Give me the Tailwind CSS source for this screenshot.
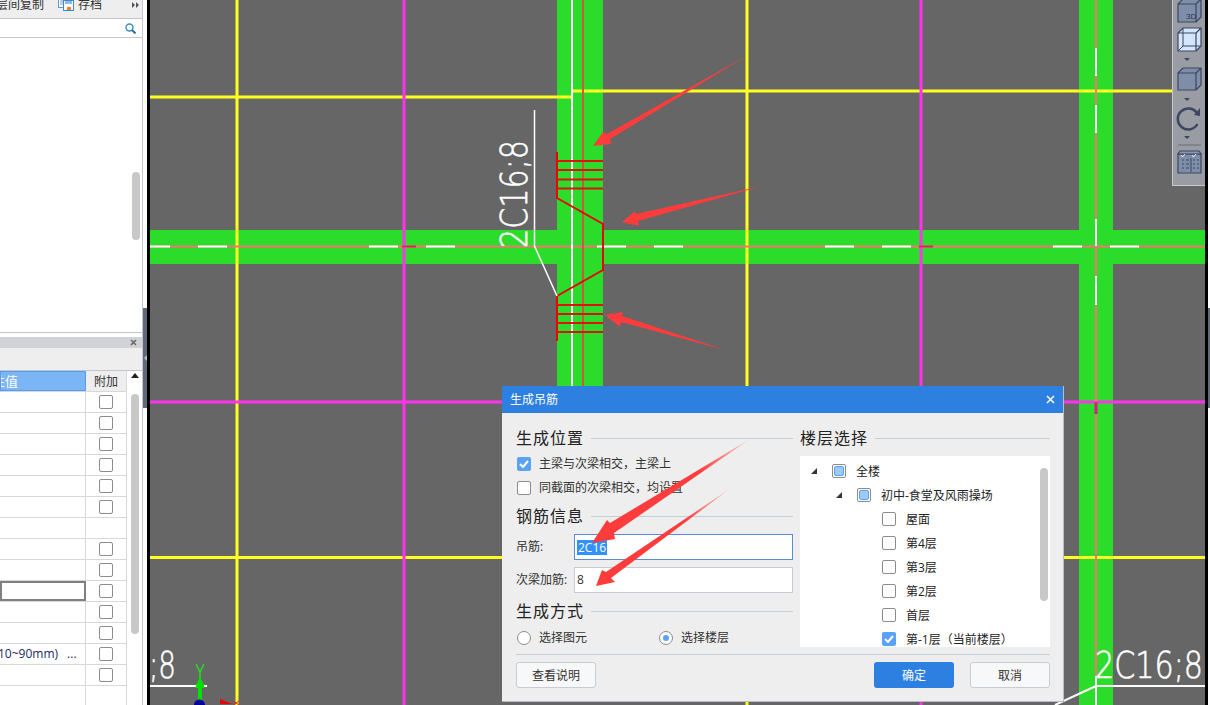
<!DOCTYPE html>
<html lang="zh-CN">
<head>
    <meta charset="UTF-8">
    <title>生成吊筋</title>
    <script src="https://cdn.jsdelivr.net/npm/@tailwindcss/browser@4"></script>
</head>
<body class="w-[1210px] h-[705px] overflow-hidden bg-white flex font-['Open_Sans','Noto_Sans_CJK_SC',sans-serif] text-[12px] text-[#333]">

    <!-- Left side panels -->
    <aside class="w-[143px] h-full flex flex-col border-r border-[#c4c4cc] overflow-hidden shrink-0">
        <div class="h-[19px] shrink-0 bg-[#eeeeee] border-b border-[#c4c4cc] flex items-center whitespace-nowrap relative overflow-hidden pb-[8px]">
            <span class="ml-[-4px] w-[62px]">层间复制</span>
            <svg class="w-[16px] h-[14px] -translate-y-px" viewBox="0 0 16 14"><rect x="0.5" y="0.5" width="9" height="10" fill="#fff" stroke="#5a9be0"/><path d="M2 3h6M2 5h6M2 7h3" stroke="#999"/><rect x="5.5" y="3.5" width="10" height="10" fill="#fff" stroke="#3b86d8"/><rect x="9" y="10" width="4" height="3" fill="#e8822e"/><rect x="7" y="4" width="7" height="3" fill="#8fb9e8"/></svg>
            <span class="ml-[4px]">存档</span>
            <svg class="absolute left-[132px] top-[2px] w-[7px] h-[6px]" viewBox="0 0 7 6"><path d="M0 0l3 3-3 3zM4 0l3 3-3 3z" fill="#555"/></svg>
        </div>
        <div class="h-[19px] shrink-0 bg-white border-b border-[#c4c4cc] flex items-center justify-end pr-[6px]">
            <svg class="w-[11px] h-[11px]" viewBox="0 0 11 11" fill="none"><circle cx="4.5" cy="4.5" r="3.5" stroke="#3a8fc4" stroke-width="1.4"/><path d="M7 7l3.5 3.5" stroke="#2a6f9e" stroke-width="2"/></svg>
        </div>
        <div class="h-[295px] shrink-0 bg-white relative border-b border-[#c4c4cc]">
            <div class="absolute left-[132px] top-[134px] w-[8px] h-[68px] rounded bg-[#c8c8c8]"></div>
        </div>
        <div class="h-[4px] shrink-0 bg-white"></div>
        <div class="h-[11px] shrink-0 bg-[#d0d2d6] flex items-center justify-end pr-[5px]">
            <svg class="w-[7px] h-[7px]" viewBox="0 0 7 7"><path d="M1 1l5 5M6 1L1 6" stroke="#666" stroke-width="1.5"/></svg>
        </div>
        <div class="h-[23px] shrink-0 bg-[#eeeeee] border-b border-[#c4c4cc]"></div>

        <div class="flex flex-1 min-h-0">
            <div class="w-[127px] shrink-0 border-r border-[#d8d8d8]">
                <div class="flex h-[21px] border-b border-[#d8d8d8]">
                    <div class="w-[86px] bg-[#7ab5f5] border border-[#5a9be8] text-white text-[13px] leading-[19px] overflow-hidden whitespace-nowrap"><span class="ml-[-9px]">性值</span></div>
                    <div class="flex-1 bg-[#eeeeee] text-center leading-[21px]">附加</div>
                </div>
                <div class="flex h-[21px] border-b border-[#d8d8d8]"><div class="w-[86px] border-r border-[#d8d8d8]"></div><div class="flex-1 flex items-center justify-center"><span class="w-[14px] h-[14px] rounded-[2px] border border-[#8c8c8c] bg-white"></span></div></div>
                <div class="flex h-[21px] border-b border-[#d8d8d8]"><div class="w-[86px] border-r border-[#d8d8d8]"></div><div class="flex-1 flex items-center justify-center"><span class="w-[14px] h-[14px] rounded-[2px] border border-[#8c8c8c] bg-white"></span></div></div>
                <div class="flex h-[21px] border-b border-[#d8d8d8]"><div class="w-[86px] border-r border-[#d8d8d8]"></div><div class="flex-1 flex items-center justify-center"><span class="w-[14px] h-[14px] rounded-[2px] border border-[#8c8c8c] bg-white"></span></div></div>
                <div class="flex h-[21px] border-b border-[#d8d8d8]"><div class="w-[86px] border-r border-[#d8d8d8]"></div><div class="flex-1 flex items-center justify-center"><span class="w-[14px] h-[14px] rounded-[2px] border border-[#8c8c8c] bg-white"></span></div></div>
                <div class="flex h-[21px] border-b border-[#d8d8d8]"><div class="w-[86px] border-r border-[#d8d8d8]"></div><div class="flex-1 flex items-center justify-center"><span class="w-[14px] h-[14px] rounded-[2px] border border-[#8c8c8c] bg-white"></span></div></div>
                <div class="flex h-[21px] border-b border-[#d8d8d8]"><div class="w-[86px] border-r border-[#d8d8d8]"></div><div class="flex-1 flex items-center justify-center"><span class="w-[14px] h-[14px] rounded-[2px] border border-[#8c8c8c] bg-white"></span></div></div>
                <div class="flex h-[21px] border-b border-[#d8d8d8]"><div class="w-[86px] border-r border-[#d8d8d8]"></div><div class="flex-1"></div></div>
                <div class="flex h-[21px] border-b border-[#d8d8d8]"><div class="w-[86px] border-r border-[#d8d8d8]"></div><div class="flex-1 flex items-center justify-center"><span class="w-[14px] h-[14px] rounded-[2px] border border-[#8c8c8c] bg-white"></span></div></div>
                <div class="flex h-[21px] border-b border-[#d8d8d8]"><div class="w-[86px] border-r border-[#d8d8d8]"></div><div class="flex-1 flex items-center justify-center"><span class="w-[14px] h-[14px] rounded-[2px] border border-[#8c8c8c] bg-white"></span></div></div>
                <div class="flex h-[21px] border-b border-[#d8d8d8]"><div class="w-[86px] border-2 border-[#808080]"></div><div class="flex-1 flex items-center justify-center"><span class="w-[14px] h-[14px] rounded-[2px] border border-[#8c8c8c] bg-white"></span></div></div>
                <div class="flex h-[21px] border-b border-[#d8d8d8]"><div class="w-[86px] border-r border-[#d8d8d8]"></div><div class="flex-1 flex items-center justify-center"><span class="w-[14px] h-[14px] rounded-[2px] border border-[#8c8c8c] bg-white"></span></div></div>
                <div class="flex h-[21px] border-b border-[#d8d8d8]"><div class="w-[86px] border-r border-[#d8d8d8]"></div><div class="flex-1 flex items-center justify-center"><span class="w-[14px] h-[14px] rounded-[2px] border border-[#8c8c8c] bg-white"></span></div></div>
                <div class="flex h-[21px] border-b border-[#d8d8d8]"><div class="w-[86px] border-r border-[#d8d8d8] overflow-hidden whitespace-nowrap leading-[20px] text-[#1c2a5a]"><span class="ml-[-2px]">10~90mm)</span><span class="ml-[9px]">...</span></div><div class="flex-1 flex items-center justify-center"><span class="w-[14px] h-[14px] rounded-[2px] border border-[#8c8c8c] bg-white"></span></div></div>
                <div class="flex h-[21px] border-b border-[#d8d8d8]"><div class="w-[86px] border-r border-[#d8d8d8]"></div><div class="flex-1 flex items-center justify-center"><span class="w-[14px] h-[14px] rounded-[2px] border border-[#8c8c8c] bg-white"></span></div></div>
                <div class="flex h-[21px]"><div class="w-[86px] border-r border-[#d8d8d8]"></div><div class="flex-1"></div></div>
            </div>
            <div class="flex-1 flex flex-col items-center">
                <svg class="w-[8px] h-[5px] mt-[2px]" viewBox="0 0 8 5"><path d="M0 5l4-5 4 5z" fill="#222"/></svg>
                <div class="w-[8px] h-[240px] mt-[16px] rounded bg-[#c8c8c8]"></div>
            </div>
        </div>
    </aside>

    <!-- Splitter -->
    <div class="w-[4px] h-full shrink-0 flex flex-col">
        <div class="h-[308px] bg-white"></div>
        <div class="h-[100px] bg-[#5f6a7a] flex items-center justify-center">
            <svg class="w-[3px] h-[6px]" viewBox="0 0 3 6"><path d="M3 0L0 3l3 3z" fill="#bbb"/></svg>
        </div>
        <div class="flex-1 bg-white"></div>
    </div>
    <div class="w-[3px] h-full shrink-0 bg-black"></div>

    <!-- CAD canvas -->
    <main class="relative w-[1055px] h-full shrink-0 bg-[#666666] overflow-hidden">
        <svg class="absolute inset-0 w-[1055px] h-[705px]" viewBox="150 0 1055 705" fill="none">
            <!-- green beams -->
            <rect x="150" y="230" width="1055" height="34" fill="#2bdc2b"/>
            <rect x="557" y="0" width="46" height="390" fill="#2bdc2b"/>
            <rect x="1079" y="0" width="34" height="705" fill="#2bdc2b"/>

            <!-- axis lines -->
            <path d="M237 0V705M747 0V705" stroke="#ffff22" stroke-width="3"/>
            <path d="M150 97H571M571 91H1205M150 557.5H1205" stroke="#ffff22" stroke-width="3"/>
            <path d="M404 0V705M921 0V705" stroke="#ff33ee" stroke-width="3"/>
            <path d="M150 402H1205" stroke="#ff33ee" stroke-width="3"/>

            <!-- beam centre lines -->
            <path d="M150 246.5H1205" stroke="#ff7070" stroke-width="2"/>
            <path d="M1096 0V705" stroke="#ff7070" stroke-width="2"/>
            <path d="M572 0V390" stroke="#ffffff" stroke-width="2"/>
            <path d="M583 0V390" stroke="#cc5a3c" stroke-width="2"/>
            <path d="M150 246.5H170M198 246.5H227M369 246.5H398M426 246.5H455M597 246.5H626M654 246.5H683M825 246.5H854M882 246.5H911M1053 246.5H1082M1110 246.5H1139" stroke="#ffffff" stroke-width="2"/>
            <path d="M1096 48V76M1096 105V133M1096 219V246M1096 276V305" stroke="#ffffff" stroke-width="2"/>
            <path d="M402 246.5H416M919 246.5H933" stroke="#e0206a" stroke-width="2"/>
            <path d="M1096 402V414" stroke="#d81c80" stroke-width="3"/>

            <!-- rebar -->
            <path d="M557 152V198L603 224V270L557 296V341" stroke="#ee0000" stroke-width="2"/>
            <path d="M557 161H603M557 170H603M557 179.500H603M557 188.500H603M557 305H603M557 314H603M557 323H603M557 332H603" stroke="#e01010" stroke-width="2"/>

            <!-- leaders and labels -->
            <path d="M534.500 110V246L557 296" stroke="#ffffff" stroke-width="1.500"/>
            <text transform="translate(527 248) rotate(-90)" font-family="DejaVu Sans" font-weight="200" font-size="37" fill="#ffffff" stroke="#ffffff" stroke-width="0.600" textLength="108" lengthAdjust="spacingAndGlyphs">2C16;8</text>
            <text x="149" y="678" font-family="DejaVu Sans" font-weight="200" font-size="37" fill="#ffffff" stroke="#ffffff" stroke-width="0.600" textLength="27" lengthAdjust="spacingAndGlyphs">;8</text>
            <path d="M150 686H207" stroke="#ffffff" stroke-width="2"/>
            <text x="1095" y="678" font-family="DejaVu Sans" font-weight="200" font-size="37" fill="#ffffff" stroke="#ffffff" stroke-width="0.600" textLength="108" lengthAdjust="spacingAndGlyphs">2C16;8</text>
            <path d="M1096 686H1205M1096 676V705" stroke="#ffffff" stroke-width="2"/>
            <path d="M1096 686L1055 705" stroke="#ffffff" stroke-width="2"/>

            <!-- axis gizmo -->
            <path d="M196 664L200 672L204 664M200 672V678" stroke="#22e022" stroke-width="1.500"/>
            <path d="M200 676L205 688H202V700H198V688H195Z" fill="#00e000"/>
            <path d="M200 704H220V699L232 704Z" fill="#ee0000"/>
            <path d="M233 701L239 705M239 701L233 705" stroke="#ee2222"/>
            <circle cx="199.500" cy="705" r="5.500" fill="#0000a0"/>
        </svg>

        <!-- Floating view toolbar -->
        <div class="absolute left-[1022px] top-0 w-[33px] h-[186px] bg-[#9a9ca4] border-b border-l border-[#c8c8d0]">
            <svg class="absolute inset-0 w-[33px] h-[186px]" viewBox="0 0 33 186" fill="none">
                <g stroke="#3c4660" stroke-width="1.200">
                    <path d="M5 4H23V22H5ZM5 4L10 -1H28V17L23 22M23 4L28 -1" fill="#7f8ea8"/>
                    <path d="M5 33H23V51H5ZM5 33L10 28H28V46L23 51M23 33L28 28" fill="#d4e6fb"/>
                    <path d="M10 28V46H28M10 46L5 51" stroke-width="1"/>
                    <path d="M5 73H23V90H5ZM5 73L10 68H28V85L23 90M23 73L28 68" fill="#7f8ea8"/>
                    <path d="M5 154H28V173H5Z" fill="#7f8ea8"/>
                    <path d="M7 151H26L28 154H5Z" fill="#8a96ac"/>
                    <path d="M8 155L9.500 157L12 154M19 155L20.500 157L23 154" stroke="#e8e8ee" stroke-width="1"/>
                    <path d="M9 160H11M13 160H16M9 164H11M13 164H16M9 168H11M13 168H16M20 160H22M24 160H26M20 164H22M24 164H26M20 168H22M24 168H26M18 158V172" stroke-width="1"/>
                </g>
                <text x="13" y="19" font-family="Liberation Sans" font-size="8" fill="#2c3450">3D</text>
                <path d="M11 58h6l-3 3zM11 98h6l-3 3zM11 136h6l-3 3z" fill="#3c4660"/>
                <path d="M24 113A10.500 10.500 0 1 0 24.500 124" stroke="#3c4660" stroke-width="2.500"/>
                <path d="M21 115L27 108V116Z" fill="#3c4660"/>
                <path d="M5 145H28" stroke="#6a6c74"/>
            </svg>
        </div>

        <!-- 生成吊筋 dialog -->
        <div class="absolute left-[352px] top-[386px] w-[562px] h-[316px] bg-[#eeeeee] border-r border-b border-[#b8bcc4] flex flex-col">
            <div class="h-[27px] shrink-0 bg-[#2d7fe0] flex items-center justify-between px-[8px] text-white">
                <span>生成吊筋</span>
                <svg class="w-[9px] h-[9px]" viewBox="0 0 9 9"><path d="M1 1l7 7M8 1L1 8" stroke="#fff" stroke-width="1.500"/></svg>
            </div>

            <div class="h-[241px] shrink-0 flex pl-[14px] pr-[13px] gap-[7px]">
                <div class="w-[277px] flex flex-col">
                    <div class="flex items-center gap-[7px] h-[24px] mt-[13px] text-[16px] text-[#222] whitespace-nowrap"><span class="tracking-[1px]">生成位置</span><span class="flex-1 h-px bg-[#c5cdd8]"></span></div>
                    <div class="flex items-center h-[24px] mt-[2px] pl-px gap-[8px]">
                        <span class="w-[14px] h-[14px] rounded-[2px] bg-[#5aa2f5] flex items-center justify-center"><svg class="w-[10px] h-[8px]" viewBox="0 0 10 8" fill="none"><path d="M1 4l3 3 5-6" stroke="#fff" stroke-width="2"/></svg></span>
                        <span>主梁与次梁相交，主梁上</span>
                    </div>
                    <div class="flex items-center h-[24px] pl-px gap-[8px]">
                        <span class="w-[14px] h-[14px] rounded-[2px] border border-[#8c8c8c] bg-white"></span>
                        <span>同截面的次梁相交，均设置</span>
                    </div>
                    <div class="flex items-center gap-[7px] h-[24px] mt-[4px] text-[16px] text-[#222] whitespace-nowrap"><span class="tracking-[1px]">钢筋信息</span><span class="flex-1 h-px bg-[#c5cdd8]"></span></div>
                    <div class="flex items-center h-[26px] mt-[6px]">
                        <span class="w-[58px]">吊筋:</span>
                        <div class="flex-1 h-[26px] bg-white border border-[#5b8bd6] pl-[2px] flex items-center"><span class="bg-[#3390ff] text-white px-px leading-[15px]">2C16</span></div>
                    </div>
                    <div class="flex items-center h-[26px] mt-[7px]">
                        <span class="w-[58px] whitespace-nowrap">次梁加筋:</span>
                        <div class="flex-1 h-[26px] bg-white border border-[#c8ccd2] pl-[2px] flex items-center">8</div>
                    </div>
                    <div class="flex items-center gap-[7px] h-[24px] mt-[6px] text-[16px] text-[#222] whitespace-nowrap"><span class="tracking-[1px]">生成方式</span><span class="flex-1 h-px bg-[#c5cdd8]"></span></div>
                    <div class="flex items-center h-[24px] mt-[3px] pl-px">
                        <span class="w-[14px] h-[14px] rounded-full border border-[#8c8c8c] bg-white"></span>
                        <span class="ml-[8px] w-[120px]">选择图元</span>
                        <span class="w-[14px] h-[14px] rounded-full border border-[#8c8c8c] bg-white flex items-center justify-center"><span class="w-[6px] h-[6px] rounded-full bg-[#5aa2f5]"></span></span>
                        <span class="ml-[8px]">选择楼层</span>
                    </div>
                </div>

                <div class="w-[250px] flex flex-col">
                    <div class="flex items-center gap-[7px] h-[24px] mt-[13px] text-[16px] text-[#222] whitespace-nowrap"><span class="tracking-[1px]">楼层选择</span><span class="flex-1 h-px bg-[#c5cdd8]"></span></div>
                    <div class="relative h-[191px] mt-[6px] bg-white overflow-hidden text-[#222]">
                        <div class="absolute right-[2px] top-[12px] w-[8px] h-[133px] rounded bg-[#c8c8c8]"></div>
                        <div class="flex items-center h-[24px] mt-[3px] pl-[11px]">
                            <svg class="w-[6px] h-[6px]" viewBox="0 0 6 6"><path d="M6 0V6H0Z" fill="#333"/></svg>
                            <span class="ml-[15px] w-[14px] h-[14px] rounded-[2px] border border-[#8c8c8c] bg-white p-px"><span class="block w-full h-full rounded-[2px] bg-[#9ccbfb] border border-[#5aa2f5]"></span></span>
                            <span class="ml-[10px] translate-y-px">全楼</span>
                        </div>
                        <div class="flex items-center h-[24px] pl-[36px]">
                            <svg class="w-[6px] h-[6px]" viewBox="0 0 6 6"><path d="M6 0V6H0Z" fill="#333"/></svg>
                            <span class="ml-[15px] w-[14px] h-[14px] rounded-[2px] border border-[#8c8c8c] bg-white p-px"><span class="block w-full h-full rounded-[2px] bg-[#9ccbfb] border border-[#5aa2f5]"></span></span>
                            <span class="ml-[10px] translate-y-px">初中-食堂及风雨操场</span>
                        </div>
                        <div class="flex items-center h-[24px] pl-[82px] gap-[10px]"><span class="w-[14px] h-[14px] rounded-[2px] border border-[#8c8c8c] bg-white"></span><span class="translate-y-px">屋面</span></div>
                        <div class="flex items-center h-[24px] pl-[82px] gap-[10px]"><span class="w-[14px] h-[14px] rounded-[2px] border border-[#8c8c8c] bg-white"></span><span class="translate-y-px">第4层</span></div>
                        <div class="flex items-center h-[24px] pl-[82px] gap-[10px]"><span class="w-[14px] h-[14px] rounded-[2px] border border-[#8c8c8c] bg-white"></span><span class="translate-y-px">第3层</span></div>
                        <div class="flex items-center h-[24px] pl-[82px] gap-[10px]"><span class="w-[14px] h-[14px] rounded-[2px] border border-[#8c8c8c] bg-white"></span><span class="translate-y-px">第2层</span></div>
                        <div class="flex items-center h-[24px] pl-[82px] gap-[10px]"><span class="w-[14px] h-[14px] rounded-[2px] border border-[#8c8c8c] bg-white"></span><span class="translate-y-px">首层</span></div>
                        <div class="flex items-center h-[24px] pl-[82px] gap-[10px]">
                            <span class="w-[14px] h-[14px] rounded-[2px] bg-[#5aa2f5] flex items-center justify-center"><svg class="w-[10px] h-[8px]" viewBox="0 0 10 8" fill="none"><path d="M1 4l3 3 5-6" stroke="#fff" stroke-width="2"/></svg></span>
                            <span class="translate-y-px">第-1层（当前楼层）</span>
                        </div>
                    </div>
                </div>
            </div>

            <div class="ml-[14px] mr-[13px] border-t border-[#c5cdd8] pt-[7px] flex">
                <button class="w-[80px] h-[26px] bg-[#f8f8f8] border border-[#c5cdd8] rounded-[3px]"><span class="relative top-px">查看说明</span></button>
                <button class="w-[80px] h-[26px] ml-auto bg-[#2d7fe0] text-white rounded-[3px]"><span class="relative top-px">确定</span></button>
                <button class="w-[80px] h-[26px] ml-[16px] bg-[#f8f8f8] border border-[#c5cdd8] rounded-[3px]"><span class="relative top-px">取消</span></button>
            </div>
        </div>
    </main>

    <!-- Right edge -->
    <div class="w-[3px] h-full shrink-0 bg-black"></div>
    <div class="w-[2px] h-full shrink-0 flex flex-col">
        <div class="h-[308px] bg-white"></div>
        <div class="h-[100px] bg-[#5f6a7a]"></div>
        <div class="flex-1 bg-white"></div>
    </div>

    <!-- Red hand-drawn annotation arrows, lying over the canvas and the dialog -->
    <svg class="absolute left-0 top-0 w-[1210px] h-[705px] pointer-events-none" viewBox="0 0 1210 705">
        <defs>
            <linearGradient id="fadeA" gradientUnits="userSpaceOnUse" x1="750" y1="439" x2="700" y2="472"><stop offset="0" stop-color="#ff3c3c" stop-opacity="0.15"/><stop offset="1" stop-color="#ff3c3c"/></linearGradient>
            <linearGradient id="fadeB" gradientUnits="userSpaceOnUse" x1="731" y1="488" x2="685" y2="520"><stop offset="0" stop-color="#ff3c3c" stop-opacity="0.15"/><stop offset="1" stop-color="#ff3c3c"/></linearGradient>
        </defs>
        <path d="M748 55L607 134L603 132L593 146L611 144L610 139Z" fill="#ff3c3c"/>
        <path d="M762 186L636 214L635 211L622 222L639 226L638 221Z" fill="#ff3c3c"/>
        <path d="M725 350L622 316L623 312L605 315L620 327L621 322Z" fill="#ff3c3c"/>
        <path d="M750 439L610 523L607 520L592 543L615 539L614 533Z" fill="url(#fadeA)"/>
        <path d="M731 488L606 572L602 570L596 586L615 582L611 578Z" fill="url(#fadeB)"/>
    </svg>
</body>
</html>
